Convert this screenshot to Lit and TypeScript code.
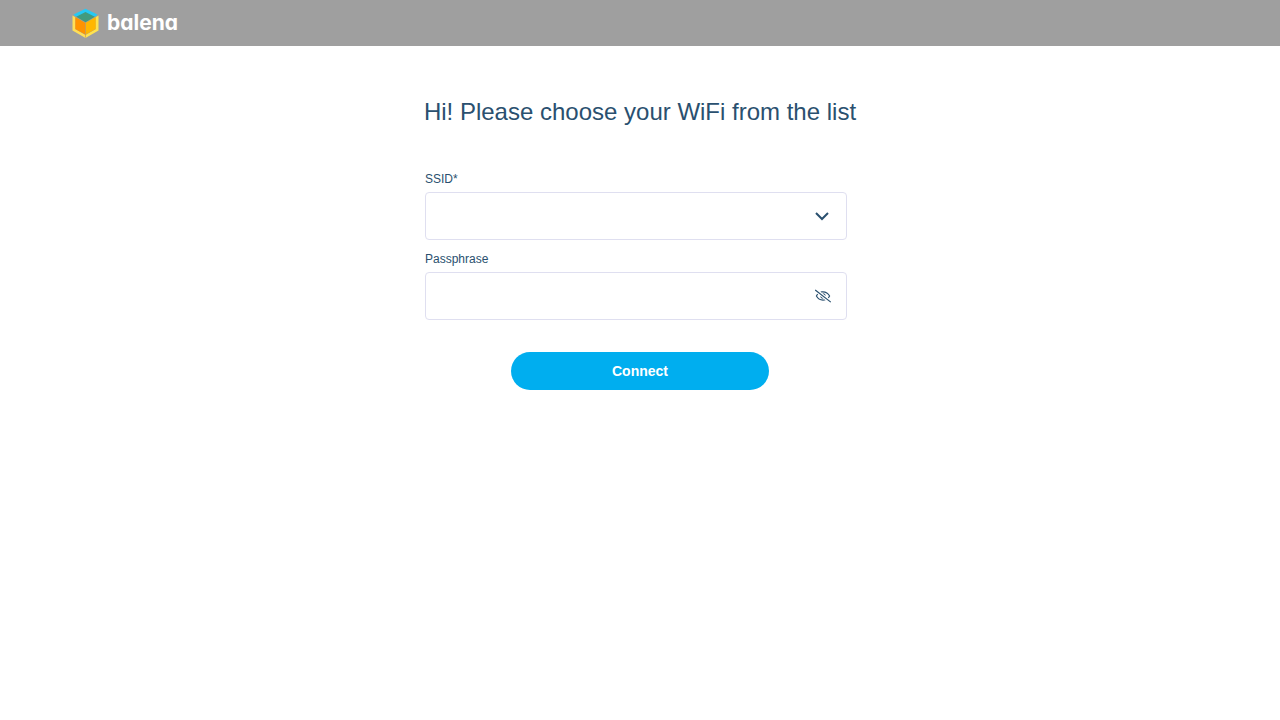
import { LitElement, html, css } from "lit";
import { customElement, state } from "lit/decorators.js";

@customElement("app-root")
export class AppRoot extends LitElement {
  static styles = css`
    :host {
      display: block;
      min-height: 100vh;
      background: #fff;
      color: #2a506f;
      font-family: "Liberation Sans", Arial, sans-serif;
      font-size: 14px;
      line-height: 20px;
    }
    * {
      box-sizing: border-box;
    }
    .bar {
      display: flex;
      align-items: center;
      height: 46px;
      padding: 0 72px;
      background: #9f9f9f;
    }
    .brand {
      display: flex;
      align-items: center;
      gap: 8px;
      color: #fff;
      text-decoration: none;
    }
    .cube {
      display: block;
      width: 27px;
      height: 30px;
    }
    .word {
      font-family: Inter, sans-serif;
      font-size: 21px;
      font-weight: 700;
      line-height: 24px;
      font-feature-settings: "cv11" 1;
    }
    .page {
      display: flex;
      flex-direction: column;
      align-items: center;
      padding: 48px 16px;
    }
    .title {
      margin: 0 0 42px;
      font-size: 24px;
      font-weight: 400;
      line-height: 36px;
      text-align: center;
    }
    .form {
      display: flex;
      flex-direction: column;
      width: 100%;
      max-width: 430px;
    }
    .field {
      display: grid;
      margin: 0 8px 12px 0;
    }
    .label {
      margin-bottom: 6px;
      font-size: 12px;
      line-height: 14px;
    }
    .box {
      display: grid;
      grid-template-columns: 1fr 48px;
      align-items: center;
    }
    .input {
      grid-area: 1 / 1 / 2 / 3;
      width: 100%;
      height: 48px;
      margin: 0;
      padding: 0 48px 0 16px;
      border: 1px solid #dfdff0;
      border-radius: 4px;
      background: transparent;
      color: inherit;
      font: inherit;
      appearance: none;
      outline: none;
    }
    .input:focus-visible {
      border-color: #00aeef;
    }
    .icon {
      grid-area: 1 / 2;
      justify-self: center;
      display: block;
      pointer-events: none;
    }
    .toggle {
      grid-area: 1 / 2;
      display: flex;
      align-items: center;
      justify-content: center;
      height: 48px;
      padding: 0;
      border: 0;
      background: none;
      color: inherit;
      cursor: pointer;
    }
    .connect {
      align-self: center;
      width: 60%;
      height: 38px;
      margin-top: 20px;
      padding: 0 16px;
      border: 0;
      border-radius: 19px;
      background: #00aeef;
      color: #fff;
      font: inherit;
      font-weight: 700;
      cursor: pointer;
    }
  `;

  @state() private revealed = false;

  private toggle() {
    this.revealed = !this.revealed;
  }

  private submit(event: Event) {
    event.preventDefault();
  }

  render() {
    return html`
      <header class="bar">
        <a class="brand" href="#">
          <svg class="cube" viewBox="0 0 27 30" aria-hidden="true">
            <path d="M0.5 7.5 3.5 9.2V21.3L13.5 27V30L0.5 22.5Z" fill="#ffdf57" />
            <path d="M26.5 7.5 23.5 9.2V21.3L13.5 27V30L26.5 22.5Z" fill="#ffe34f" />
            <path d="M13.5 0.8 25.4 6.6 23.4 8.6H3.6L1.6 6.6Z" fill="#25c9f5" />
            <path d="M13.5 4 22.8 8.7 13.5 14.2 4.2 8.7Z" fill="#429a7e" />
            <path d="M3.3 9 13.2 14.8V26.6L3.3 21Z" fill="#ff9300" />
            <path d="M23.7 9 13.8 14.8V26.6L23.7 21Z" fill="#ffb700" />
            <path d="M13.5 14.3V29.5" stroke="#d99a3c" stroke-width="0.6" />
          </svg>
          <span class="word">balena</span>
        </a>
      </header>
      <main class="page">
        <h1 class="title">Hi! Please choose your WiFi from the list</h1>
        <form class="form" @submit=${this.submit}>
          <div class="field">
            <label class="label" for="ssid">SSID*</label>
            <div class="box">
              <select class="input" id="ssid" required>
                <option value=""></option>
              </select>
              <svg class="icon" width="16" height="16" viewBox="0 0 16 16" fill="none" aria-hidden="true">
                <path d="M1 5 7 11 13 5" stroke="currentColor" stroke-width="2" />
              </svg>
            </div>
          </div>
          <div class="field">
            <label class="label" for="passphrase">Passphrase</label>
            <div class="box">
              <input class="input" id="passphrase" type=${this.revealed ? "text" : "password"} />
              <button class="toggle" type="button" aria-label="Show passphrase" @click=${this.toggle}>
                <svg width="16" height="14" viewBox="0 0 640 512" fill="currentColor" aria-hidden="true">
                  <path d="M634 471 36 3.5a16 16 0 0 0-22.5 2.5l-10 12.5A16 16 0 0 0 6 41l598 467.500a16 16 0 0 0 22.500-2.500l10-12.500A16 16 0 0 0 634 471ZM296.800 146.500l134.800 105.400C429.400 191.900 380.500 144 320 144a112.300 112.300 0 0 0-23.200 2.500Zm46.400 219L208.400 260.100C210.600 320.100 259.500 368 320 368a113 113 0 0 0 23.200-2.500ZM320 112c98.700 0 189.100 55 237.900 144a285.500 285.500 0 0 1-44 60.200l37.700 29.500a333.700 333.700 0 0 0 52.900-75.100 32.400 32.400 0 0 0 0-29.200C550.300 135.600 442.900 64 320 64c-36.700 0-71.700 7-104.600 18.800l46.400 36.300c19-4.300 38.300-7.100 58.200-7.100Zm0 288c-98.700 0-189.100-55-237.900-144a285.500 285.500 0 0 1 44.100-60.200l-37.700-29.500a333.600 333.600 0 0 0-52.900 75.100 32.400 32.400 0 0 0 0 29.200C89.700 376.400 197.100 448 320 448c36.700 0 71.700-7 104.600-18.800l-46.400-36.300C359.200 397.200 339.900 400 320 400Z" />
                </svg>
              </button>
            </div>
          </div>
          <button class="connect" type="submit">Connect</button>
        </form>
      </main>
    `;
  }
}
